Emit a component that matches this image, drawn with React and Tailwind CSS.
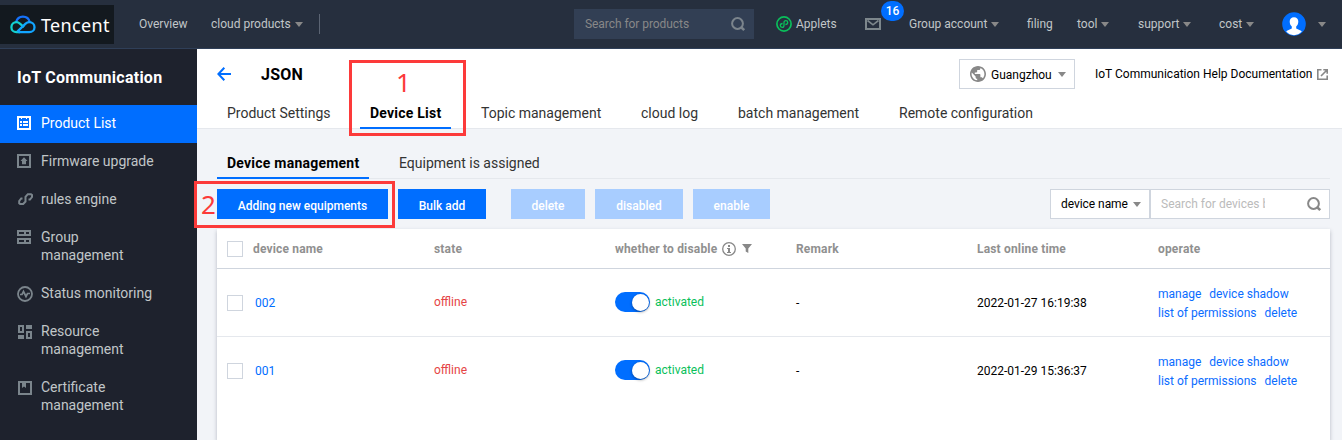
import React from "react";

function Caret({ className = "" }) {
  return (
    <svg className={"h-[5px] w-[8px] shrink-0 " + className} viewBox="0 0 8 5" fill="#888888">
      <path d="M0 0h8L4 5z" />
    </svg>
  );
}

function SearchIcon({ className = "" }) {
  return (
    <svg className={"h-[15px] w-[15px] shrink-0 " + className} viewBox="0 0 15 15" fill="none" stroke="currentColor">
      <circle cx="6.5" cy="6.5" r="5.4" strokeWidth="2" />
      <path d="M9.8 9.8l3.4 3.4" strokeWidth="2.6" />
    </svg>
  );
}

function Logo() {
  return (
    <svg className="h-[19px] w-[26px] shrink-0" viewBox="0 0 26 19" fill="none" strokeWidth="2.3">
      <path d="M6.1 7.1C7 3.900 9.600 1.600 12.900 1.600C16.300 1.600 19 3.900 19.700 7.100" stroke="#1672fa" />
      <path d="M14 12.200L9.900 8.600C8.900 7.700 7.800 7.200 6.500 7.200C3.600 7.200 1.400 9.400 1.400 12.200C1.400 15 3.600 17.200 6.500 17.200L10 17.100" stroke="#13d0d0" />
      <path d="M8.500 17.200H19.300C22.200 17.200 24.500 15 24.500 12.200C24.500 9.400 22.200 7.200 19.300 7.200C17.900 7.200 16.600 7.800 15.600 8.700L7.300 16.700" stroke="#12a5ff" />
    </svg>
  );
}

const sideIcons = {
  list: (
    <svg className="mt-[2px] h-[14px] w-[14px]" viewBox="0 0 14 14" fill="currentColor">
      <path fillRule="evenodd" d="M0 0h14v14H0zM2 2v10h10V2z" />
      <path d="M3 5h2v2H3zM6 5h5v2H6zM3 8h2v2H3zM6 8h5v2H6zM4 1h1v2H4zM9 1h1v2H9z" />
    </svg>
  ),
  firmware: (
    <svg className="mt-[2px] h-[14px] w-[14px]" viewBox="0 0 14 14" fill="currentColor">
      <path fillRule="evenodd" d="M0 0h14v14H0zM2 2v10h10V2z" />
      <path d="M7 3.200L10.500 7H9v3.200H5V7H3.500z" />
    </svg>
  ),
  rules: (
    <svg className="mt-[3px] ml-px h-[12px] w-[15px]" viewBox="0 0 15 12" fill="none" stroke="currentColor" strokeWidth="2">
      <path d="M4.500 5.500H3.200L1.200 8V10.200L2.200 11H5.200L7.500 8.500V3.800L9.800 1.200H13L14 2V4L12 6.500H10.500" />
    </svg>
  ),
  group: (
    <svg className="mt-[2px] h-[14px] w-[14px]" viewBox="0 0 14 14" fill="currentColor">
      <path fillRule="evenodd" d="M0 0h14v6H0zM2 2v2h5V2zM9 2v2h3V2zM0 8h14v6H0zM2 10v2h5v-2zM9 10v2h3v-2z" />
    </svg>
  ),
  status: (
    <svg className="mt-[2px] h-[16px] w-[16px]" viewBox="0 0 16 16" fill="none" stroke="currentColor">
      <circle cx="8" cy="8" r="7" strokeWidth="1.800" />
      <path d="M3 8.500H5L6.500 5.500L9 10.500L10.500 7.500H13" strokeWidth="1.700" />
    </svg>
  ),
  resource: (
    <svg className="mt-[3px] ml-px h-[14px] w-[14px]" viewBox="0 0 14 14" fill="currentColor">
      <path fillRule="evenodd" d="M0 0h6v8H0zM2 2v4h2V2zM8 0h6v4H8zM0 10h6v4H0zM8 6h6v8H8zM10 8v4h2V8z" />
    </svg>
  ),
  certificate: (
    <svg className="mt-[3px] ml-px h-[14px] w-[14px]" viewBox="0 0 14 14" fill="currentColor">
      <path fillRule="evenodd" d="M0 0h14v14H0zM2 2v10h10V2z" />
      <path d="M4 1h4v6L6 5.500L4 7z" />
    </svg>
  ),
};

const sideItems = [
  { icon: "list", lines: ["Product List"], active: true },
  { icon: "firmware", lines: ["Firmware upgrade"] },
  { icon: "rules", lines: ["rules engine"] },
  { icon: "group", lines: ["Group", "management"] },
  { icon: "status", lines: ["Status monitoring"] },
  { icon: "resource", lines: ["Resource", "management"] },
  { icon: "certificate", lines: ["Certificate", "management"] },
];

function Header() {
  return (
    <header className="flex h-[49px] shrink-0 items-center border-b border-[#2f3f58] bg-[#262f3e] text-[12px] leading-[18px] text-[#c1c6c8]">
      <div className="mt-px flex h-[39px] w-[114px] shrink-0 items-center bg-[#13191f] pl-[10px]">
        <Logo />
        <span className="ml-[5px] pt-px font-['Noto_Sans','Open_Sans',sans-serif] text-[18px] leading-[24px] tracking-[0.35px] text-white">Tencent</span>
      </div>
      <span className="ml-[25px] w-[72px] shrink-0">Overview</span>
      <span className="w-[84px] shrink-0">cloud products</span>
      <Caret />
      <div className="ml-[16px] h-[20px] w-px bg-[#5b6473]" />
      <div className="ml-[254px] flex h-[30px] w-[180px] shrink-0 items-center bg-[#323f54] pr-[8px] pl-[11px]">
        <span className="flex-1 tracking-[-0.06px] text-[#888888]">Search for products</span>
        <SearchIcon className="text-[#7b848c]" />
      </div>
      <svg className="ml-[22px] h-[16px] w-[16px] shrink-0" viewBox="0 0 16 16" fill="none" stroke="#0abf5b">
        <circle cx="8" cy="8" r="7.100" strokeWidth="1.700" />
        <path d="M6.600 7.500C5.200 7.600 4.300 8.500 4.300 9.600C4.300 10.700 5.100 11.400 6.100 11.400C7.200 11.400 8 10.600 8 9.500V6.500C8 5.400 8.800 4.600 9.900 4.600C10.900 4.600 11.700 5.300 11.700 6.400C11.700 7.500 10.800 8.400 9.400 8.500" strokeWidth="1.300" />
      </svg>
      <span className="ml-[4px] w-[69px] shrink-0">Applets</span>
      <div className="relative w-[44px] shrink-0">
        <svg className="h-[12px] w-[16px]" viewBox="0 0 16 12" fill="none" stroke="#7d878c" strokeWidth="2">
          <path d="M1 1h14v10H1z" />
          <path d="M2.500 2.500L8 6.800L13.500 2.500" strokeWidth="1.600" />
        </svg>
        <span className="absolute top-[-17px] left-[16px] flex h-[20px] w-[23px] items-center justify-center rounded-full bg-[#006eff] text-[12px] font-medium text-white">16</span>
      </div>
      <span className="w-[82px] shrink-0">Group account</span>
      <Caret />
      <span className="ml-[28px] w-[50px] shrink-0">filing</span>
      <span className="w-[24px] shrink-0">tool</span>
      <Caret />
      <span className="ml-[29px] w-[45px] shrink-0">support</span>
      <Caret />
      <span className="ml-[28px] w-[27px] shrink-0">cost</span>
      <Caret />
      <svg className="ml-[28px] h-[24px] w-[24px] shrink-0" viewBox="0 0 24 24">
        <circle cx="12" cy="12" r="11.800" fill="#006eff" />
        <path d="M12 5.200C9.300 5.200 7.700 7 7.700 9.500C7.700 11.600 8.500 13.500 9.800 14.500V16.500L5 18.700L4.200 19.600C6.200 21.900 8.900 23.200 12 23.200C15.100 23.200 17.800 21.900 19.800 19.600L19 18.700L14.200 16.500V14.500C15.500 13.500 16.300 11.600 16.300 9.500C16.300 7 14.700 5.200 12 5.200z" fill="#ffffff" />
      </svg>
      <Caret className="ml-[12px]" />
    </header>
  );
}

function Sidebar() {
  return (
    <aside className="w-[197px] shrink-0 bg-[#1e222d]">
      <h1 className="flex h-[56px] items-center pt-px pl-[17px] text-[16px] font-bold tracking-[0.25px] text-white">IoT Communication</h1>
      {sideItems.map((item) => (
        <div
          key={item.lines.join(" ")}
          className={"flex pt-[9px] pb-[11px] pl-[17px] text-[14px] leading-[18px] " + (item.active ? "bg-[#006eff] text-white" : "text-[#7b858c]")}
        >
          <div className="w-[24px] shrink-0">{sideIcons[item.icon]}</div>
          <div className={item.active ? "" : "text-[#c1c6c8]"}>
            {item.lines.map((line) => (
              <div key={line}>{line}</div>
            ))}
          </div>
        </div>
      ))}
    </aside>
  );
}

function Tab({ active, className = "", children }) {
  return (
    <div
      className={
        "relative flex h-full items-center px-[10px] text-[14px] " +
        (active ? "font-bold tracking-[0.23px] text-black after:absolute after:right-0 after:-bottom-px after:left-0 after:h-[2px] after:bg-[#006eff] " : "text-[#333333] ") +
        className
      }
    >
      {children}
    </div>
  );
}

function Checkbox() {
  return <div className="h-[16px] w-[16px] border border-[#cfd5de] bg-white" />;
}

const columns = "grid grid-cols-[36px_181px_181px_181px_181px_181px_172px] items-center";

function Row({ id, time, last }) {
  return (
    <div className={columns + " h-[68px] border-b text-[12px] leading-[18px] text-black " + (last ? "border-transparent" : "border-[#e5e8ed]")}>
      <div className="pt-px pl-[10px]"><Checkbox /></div>
      <div className="pl-[2px] text-[#006eff]">{id}</div>
      <div className="pb-px text-[#e54545]">offline</div>
      <div className="flex items-center pb-px text-[#0abf5b]">
        <div className="mr-[5px] flex h-[20px] w-[35px] items-center justify-end rounded-full bg-[#006eff] pr-px">
          <div className="h-[17px] w-[17px] rounded-full bg-white shadow-[0_1px_3px_rgba(0,0,0,0.4)]" />
        </div>
        activated
      </div>
      <div>-</div>
      <div>{time}</div>
      <div className="pt-[2px] leading-[19px] text-[#0a6cff]">
        <div className="flex gap-[8px]"><span>manage</span><span>device shadow</span></div>
        <div className="flex gap-[8px]"><span>list of permissions</span><span>delete</span></div>
      </div>
    </div>
  );
}

function DeviceTable() {
  return (
    <section className="flex-1 bg-white shadow-[0_2px_4px_rgba(54,58,80,0.32)]">
      <div className={columns + " h-[40px] border-b border-[#cfd5de] text-[12px] font-bold tracking-[0.17px] text-[#909090]"}>
        <div className="pl-[10px]"><Checkbox /></div>
        <div>device name</div>
        <div>state</div>
        <div className="flex items-center">
          whether to disable
          <svg className="ml-[5px] h-[14px] w-[14px]" viewBox="0 0 14 14" fill="#888888">
            <circle cx="7" cy="7" r="6.300" fill="none" stroke="#888888" strokeWidth="1.300" />
            <path d="M6 3h2v2H6zM5 6h3v4h1v1H5v-1h1V7H5z" />
          </svg>
          <svg className="ml-[6px] h-[9px] w-[10px]" viewBox="0 0 10 9" fill="#888888">
            <path d="M0 0h10L6.300 4.500V9L3.700 7.500V4.500z" />
          </svg>
        </div>
        <div>Remark</div>
        <div>Last online time</div>
        <div>operate</div>
      </div>
      <Row id="002" time="2022-01-27 16:19:38" />
      <Row id="001" time="2022-01-29 15:36:37" last />
    </section>
  );
}

function Toolbar() {
  const base = "flex h-[30px] shrink-0 items-center justify-center pt-[3px] font-medium text-white ";
  return (
    <div className="flex py-[10px] text-[12px] leading-[18px]">
      <div className={base + "w-[171px] bg-[#006eff]"}>Adding new equipments</div>
      <div className={base + "ml-[10px] w-[88px] bg-[#006eff]"}>Bulk add</div>
      <div className={base + "ml-[25px] w-[74px] bg-[#a8cdff]"}>delete</div>
      <div className={base + "ml-[10px] w-[88px] bg-[#a8cdff]"}>disabled</div>
      <div className={base + "ml-[10px] w-[77px] bg-[#a8cdff]"}>enable</div>
      <div className="ml-auto flex h-[30px] w-[100px] items-center border border-[#cfd5de] bg-white pl-[10px] text-black">
        <span className="w-[67px] whitespace-nowrap tracking-[-0.05px]">device name</span>
        <Caret className="ml-[5px]" />
      </div>
      <div className="flex h-[30px] w-[180px] items-center justify-between border border-[#cfd5de] bg-white pr-[7px] pl-[10px]">
        <span className="w-[104px] overflow-hidden whitespace-nowrap text-[#bbbbbb]">Search for devices by name</span>
        <SearchIcon className="text-[#888888]" />
      </div>
    </div>
  );
}

export default function App() {
  return (
    <div className="relative flex h-[440px] w-[1342px] flex-col overflow-hidden bg-[#f2f4f8] font-['Roboto','Liberation_Sans',sans-serif]">
      <Header />
      <div className="flex min-h-0 flex-1">
        <Sidebar />
        <main className="flex min-w-0 flex-1 flex-col">
          <div className="h-[80px] shrink-0 border-b border-[#e5e8ed] bg-white pl-[20px]">
            <div className="flex h-[50px] items-center">
              <svg className="h-[14px] w-[14px]" viewBox="0 0 14 14" fill="none" stroke="#006eff" strokeWidth="2">
                <path d="M7.300 0.800L1.400 7L7.300 13.200M1.500 7H14" />
              </svg>
              <h2 className="ml-[30px] pt-[2px] text-[16px] font-bold tracking-[0.2px] text-black">JSON</h2>
              <div className="ml-auto flex h-[30px] w-[116px] items-center border border-[#cfd5de] pl-[10px] text-[12px] text-black">
                <svg className="h-[16px] w-[16px]" viewBox="2 2 20 20" fill="#888888">
                  <path d="M12 2C6.480 2 2 6.480 2 12s4.480 10 10 10 10-4.480 10-10S17.520 2 12 2zm-1 17.930c-3.950-.49-7-3.850-7-7.930 0-.62.080-1.210.210-1.790L9 15v1c0 1.100.9 2 2 2v1.930zm6.900-2.540c-.26-.81-1-1.390-1.900-1.390h-1v-3c0-.55-.45-1-1-1H8v-2h2c.55 0 1-.45 1-1V7h2c1.100 0 2-.9 2-2v-.41c2.930 1.190 5 4.060 5 7.410 0 2.080-.8 3.970-2.100 5.390z" />
                </svg>
                <span className="ml-[5px] w-[67px] pt-px">Guangzhou</span>
                <Caret />
              </div>
              <span className="ml-[20px] w-[222px] text-[12px] text-black">IoT Communication Help Documentation</span>
              <svg className="mr-[14px] h-[11px] w-[11px]" viewBox="0 0 11 11" fill="none" stroke="#888888" strokeWidth="1.600">
                <path d="M4.500 0.800H0.800V10.200H10.200V6.500M6.300 0.800H10.200V4.700M10 1L4 7" />
              </svg>
            </div>
            <nav className="flex h-[29px] gap-[20px]">
              <Tab className="w-[123px] whitespace-nowrap">Product Settings</Tab>
              <Tab active className="w-[91px] whitespace-nowrap">Device List</Tab>
              <Tab className="w-[140px] whitespace-nowrap">Topic management</Tab>
              <Tab className="w-[77px] whitespace-nowrap">cloud log</Tab>
              <Tab className="w-[141px] whitespace-nowrap">batch management</Tab>
              <Tab>Remote configuration</Tab>
            </nav>
          </div>
          <div className="flex min-h-0 flex-1 flex-col pr-[12px] pl-[20px] pt-[19px]">
            <nav className="flex h-[31px] shrink-0 gap-[20px] border-b border-[#e5e8ed]">
              <Tab active className="w-[152px] whitespace-nowrap">Device management</Tab>
              <Tab>Equipment is assigned</Tab>
            </nav>
            <Toolbar />
            <DeviceTable />
          </div>
        </main>
      </div>
      <div className="absolute top-[60px] left-[349px] h-[76px] w-[117px] border-[3px] border-[#fc3a3a]" />
      <span className="absolute top-[64px] left-[396px] font-['Noto_Sans','Open_Sans',sans-serif] text-[26px] leading-[36px] text-[#fc3a3a]">1</span>
      <div className="absolute top-[181px] left-[194px] h-[47px] w-[201px] border-[3px] border-[#fc3a3a]" />
      <span className="absolute top-[186px] left-[201px] font-['Noto_Sans','Open_Sans',sans-serif] text-[26px] leading-[36px] text-[#fc3a3a]">2</span>
    </div>
  );
}
